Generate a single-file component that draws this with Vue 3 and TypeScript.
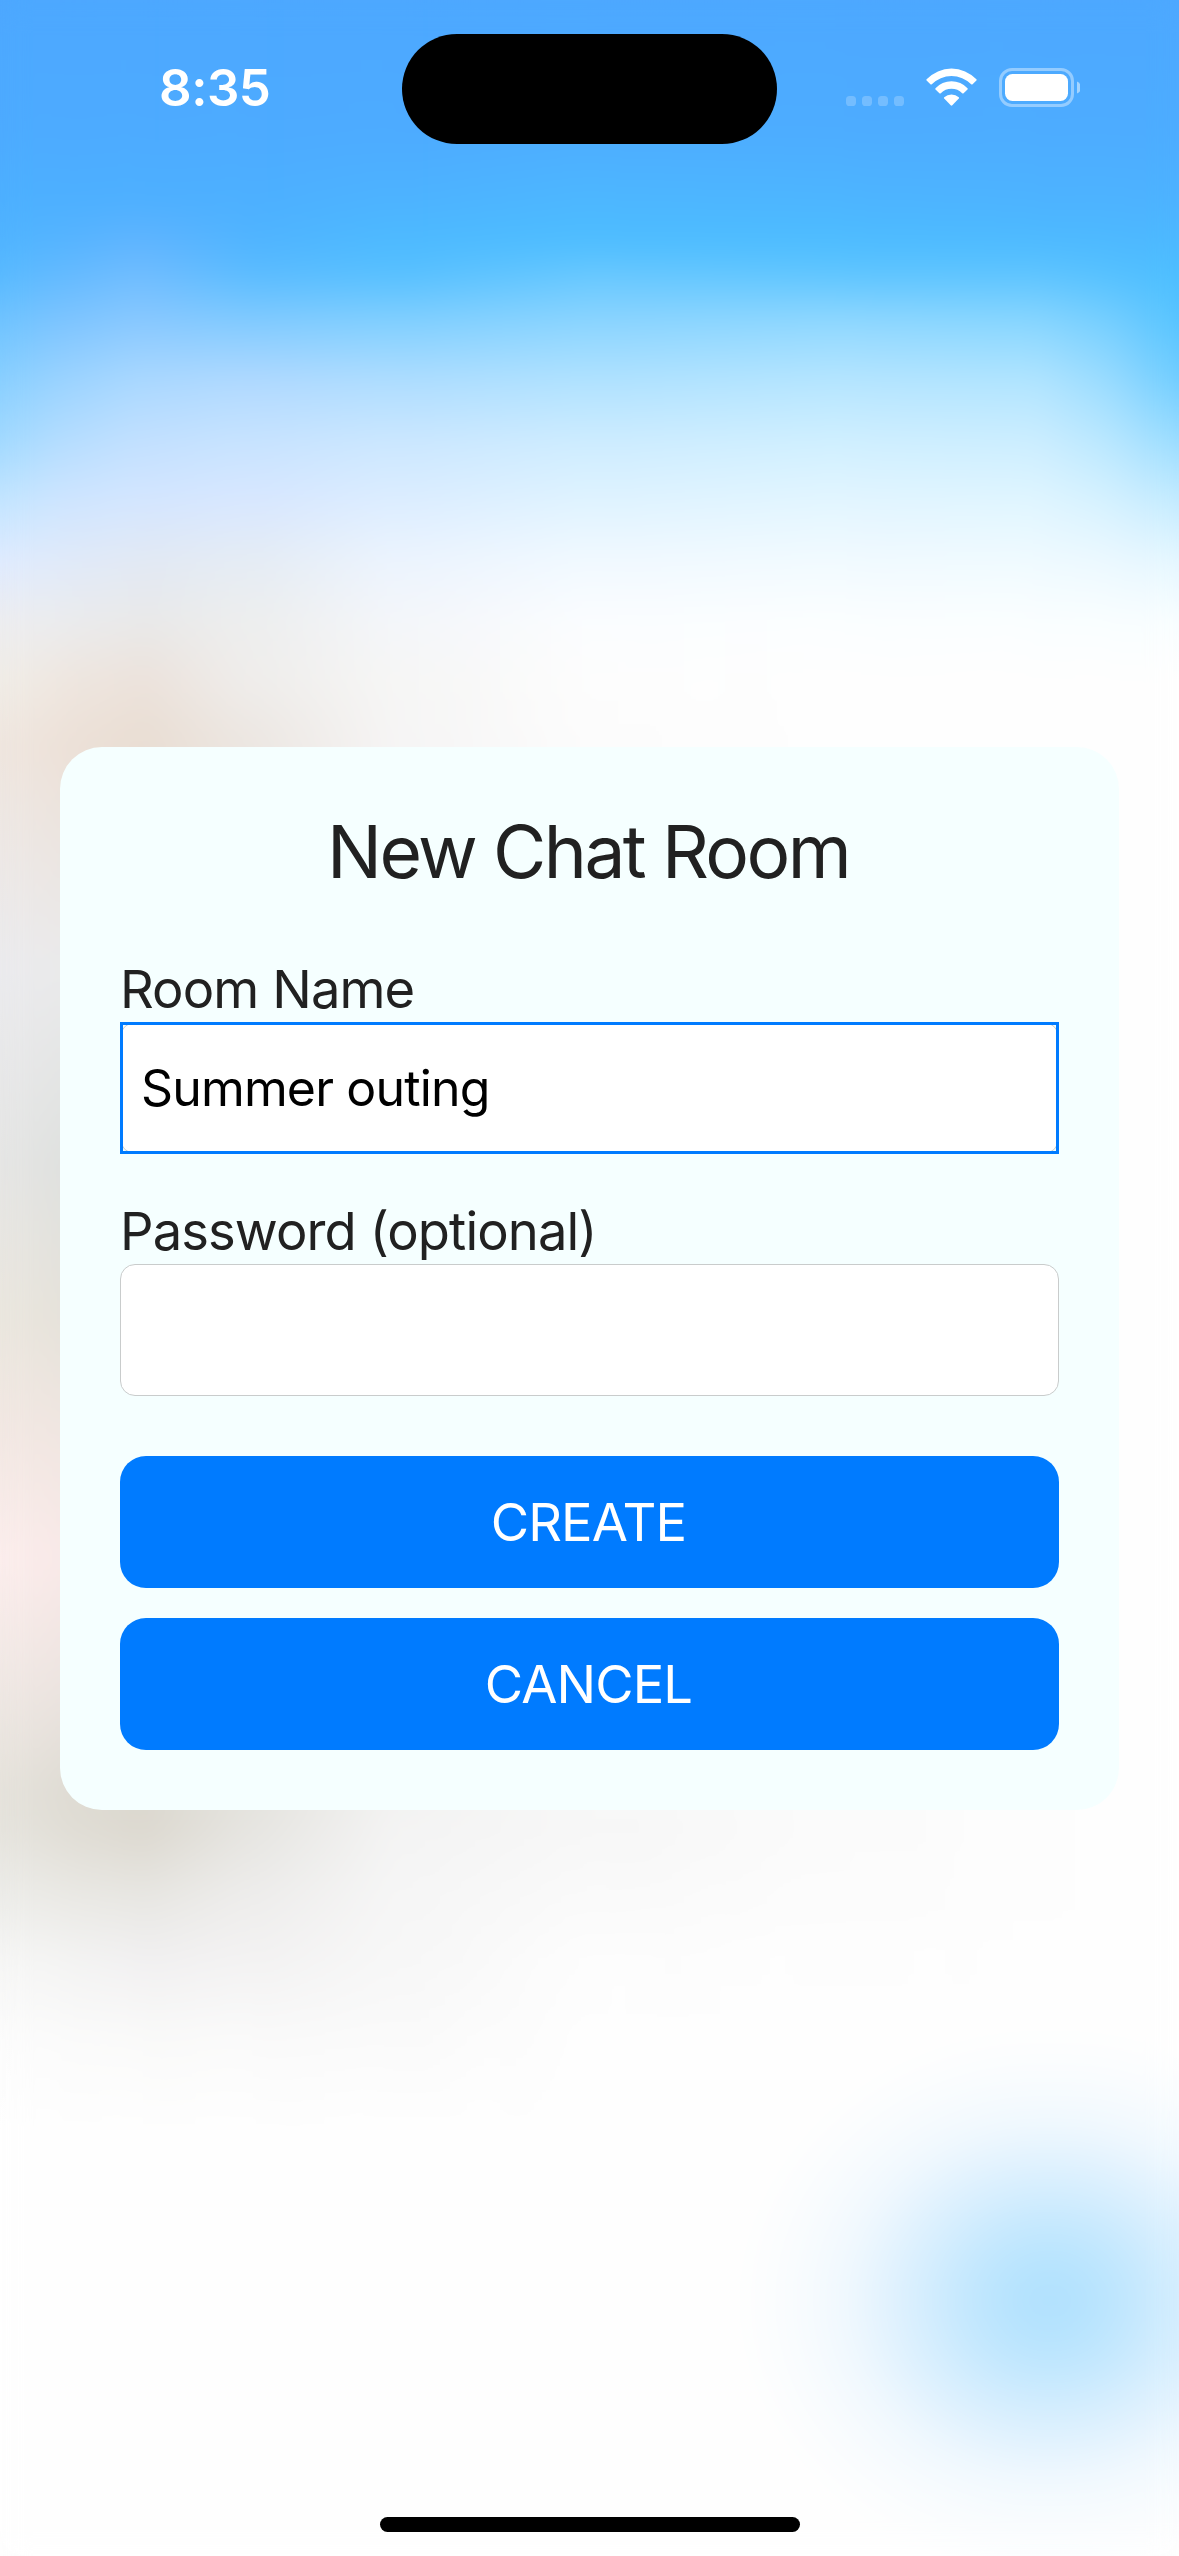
<script setup lang="ts">
import { ref } from 'vue'

const roomName = ref('Summer outing')
const password = ref('')

// Backdrop colour mesh: each column is a vertical gradient that fades
// horizontally into the next one.
const rows: number[] = [0, 130, 200, 240, 275, 320, 380, 440, 500, 560, 620, 680, 745, 970, 1160, 1320, 1430, 1560, 1690, 1790, 1830, 1900, 1960, 2040, 2130]
const mesh: { x: number; colors: string }[] = [
  { x: 0, colors: '4da8ff 4dabff 4db0ff 50b4ff 58baff 6ec3ff 88cfff a0d9ff c2e5ff dfebff ededf0 f0ede7 efe6df ebebee e6e6e5 ebe7df f2e8e3 fceeed efe8e4 e6e3dc e6e4de ededea f6f6f5 fcfcfc fefefe' },
  { x: 60, colors: '4da8ff 4dabff 4db0ff 55b4ff 63baff 7cc4ff 9ad3ff b4ddff cee5ff e0eafa ebecee efe7e0 ede1d8 eaeaeb dfe1df e6e2da f0e6e1 f9e9e8 ece4e0 dfdcd4 e1ded6 ebeae6 f4f4f3 fbfbfb fefefe' },
  { x: 140, colors: '4da8ff 4dabff 4eb0ff 5fb4ff 70bdff 88c8ff aad8ff c2e0ff d4e6ff e2e9f4 e9e9e9 ece2db e9ddd2 eaeaea dddfdd e4e0d8 eee4df f6e7e6 e8e1dc dbd8cf dcd8cf e8e7e3 f1f0f1 fafaf9 fefefe' },
  { x: 250, colors: '4da8ff 4dabff 4db0ff 50b4ff 5bbcff 80caff b0d9ff c7e3ff d8e7ff e5ecf4 edeeee efedeb ece6e1 eeeeee e4e4e4 e8e6e0 f0e8e4 f6eae9 ece7e4 e4e2dd e6e5e1 eeedec f3f2f2 fafafa fefefe' },
  { x: 400, colors: '4da8ff 4dabff 4db3ff 4dbaff 57c0ff 80cfff aeddff cbe7ff dcedff ecf4fe f4f6fa f6f6f5 f6f5f5 f8f8f8 f6f6f6 f6f6f5 f8f6f5 faf6f6 f6f4f3 f3f2f1 f4f4f4 f6f6f6 f7f7f7 fafafa fefefe' },
  { x: 600, colors: '4da8ff 4dadff 4db7ff 4dbdff 68c8ff 8ad4ff b0e2ff cdecff dff3ff f1f9ff fbfdff fdfdfd fcfcfc fdfdfd fdfdfd fdfdfd fdfdfd fcfcfc f9f9f9 f8f8f8 f7f7f7 fafafa fdfdfd fefefe fefefe' },
  { x: 850, colors: '4da8ff 4dacff 4db5ff 4dbcff 5fc5ff 8ed7ff b5e5ff cfefff e2f5ff f1faff fbfeff fefefe fefefe fefefe fefefe fefefe fefefe fefefe fcfcfc fbfbfb fbfbfb fcfcfc fdfdfd fefefe fefefe' },
  { x: 1040, colors: '4da8ff 4dacff 4db3ff 4dbaff 5ec4ff 86d5ff b0e4ff cbedff dff5ff effaff fafeff fefefe fefefe fefefe fefefe fefefe fefefe fefefe fdfdfd fdfdfd fdfdfd fdfdfd fefefe fefefe fefefe' },
  { x: 1110, colors: '4da8ff 4dacff 4db3ff 4db9ff 55c1ff 74ceff 98dbff b8e7ff d4f1ff ebf8ff f9feff fefefe fefefe fefefe fefefe fefefe fefefe fefefe fefefe fefefe fefefe fefefe fefefe fefefe fefefe' },
  { x: 1179, colors: '4da8ff 4dacff 4db2ff 4db8ff 4dbeff 56c3ff 6fccff 98dbff c2eaff e4f6ff f8fdff fefefe fefefe fefefe fefefe fefefe fefefe fefefe fefefe fefefe fefefe fefefe fefefe fefefe fefefe' },
]

const layers = mesh.map((column, i) => {
  const stops = column.colors.split(' ').map((c, r) => `#${c} ${rows[r]}px`).join(', ')
  const fade = i === 0 ? 'none' : `linear-gradient(to right, transparent ${mesh[i - 1].x}px, #000 ${column.x}px)`
  return { background: `linear-gradient(to bottom, ${stops})`, maskImage: fade }
})
</script>

<template>
  <div class="screen">
    <div class="backdrop" aria-hidden="true">
      <div v-for="(layer, i) in layers" :key="i" class="layer" :style="layer"></div>
      <div class="layer glow"></div>
      <div class="layer frost"></div>
    </div>

    <header class="status">
      <div class="side time">8:35</div>
      <div class="island"></div>
      <div class="side icons">
        <svg width="240" height="60" viewBox="840 60 240 60" fill="#fff">
          <g opacity="0.22">
            <rect x="846" y="96" width="10" height="10" rx="3.6" />
            <rect x="862" y="96" width="10" height="10" rx="3.6" />
            <rect x="878" y="96" width="10" height="10" rx="3.6" />
            <rect x="894" y="96" width="10" height="10" rx="3.6" />
          </g>
          <path d="M926.6 79.3A34.3 34.3 0 0 1 976.4 79.3Q976.9 80 976.4 80.6L972.6 84.3Q971.9 84.9 971.2 84.3A27.7 27.7 0 0 0 931.8 84.3Q931.1 84.9 930.4 84.3L926.6 80.6Q926.1 80 926.6 79.3Z" />
          <path d="M935.5 88.2A21.7 21.7 0 0 1 967.5 88.2Q968.1 88.9 967.5 89.5L963.6 93.2Q962.9 93.8 962.2 93.2A15.2 15.2 0 0 0 940.8 93.2Q940.1 93.8 939.4 93.2L935.5 89.5Q934.9 88.9 935.5 88.2Z" />
          <path d="M944.2 97.2A11 11 0 0 1 958.8 97.2Q959.4 97.9 958.8 98.6L952.3 105.3Q951.5 106.1 950.7 105.3L944.2 98.6Q943.6 97.9 944.2 97.2Z" />
          <rect x="1000.5" y="69.5" width="72" height="36" rx="11.5" fill="none" stroke="#fff" stroke-opacity="0.4" stroke-width="3" />
          <rect x="1005" y="74" width="63" height="27" rx="7.5" />
          <path d="M1077 81.6Q1081.2 83.6 1081.2 87.6T1077 93.6Z" opacity="0.5" />
        </svg>
      </div>
    </header>

    <main class="stage">
      <form class="card" @submit.prevent>
        <h1 class="title">New Chat Room</h1>
        <label class="field">
          <span class="label">Room Name</span>
          <span class="control focused"><input v-model="roomName" type="text" /></span>
        </label>
        <label class="field">
          <span class="label">Password (optional)</span>
          <span class="control"><input v-model="password" type="password" /></span>
        </label>
        <div class="actions">
          <button type="button">CREATE</button>
          <button type="button">CANCEL</button>
        </div>
      </form>
    </main>

    <footer class="home"><div class="indicator"></div></footer>
  </div>
</template>

<style>
body {
  margin: 0;
}
</style>

<style scoped>
.screen {
  position: relative;
  width: 1179px;
  height: 2556px;
  overflow: hidden;
  display: flex;
  flex-direction: column;
  font-family: Inter, "Liberation Sans", sans-serif;
  color: #212121;
}
.backdrop,
.layer {
  position: absolute;
  inset: 0;
}
.glow {
  background: radial-gradient(ellipse 310px 270px at 1050px 2301px,
    rgba(77, 188, 255, 0.43) 0%, rgba(77, 188, 255, 0.415) 10%, rgba(77, 188, 255, 0.37) 20%,
    rgba(77, 186, 255, 0.31) 30%, rgba(77, 184, 255, 0.24) 40%, rgba(77, 180, 255, 0.155) 53%,
    rgba(77, 180, 255, 0.08) 66%, rgba(77, 180, 255, 0.03) 82%, rgba(77, 180, 255, 0) 100%);
}
.frost {
  backdrop-filter: blur(14px);
}
.status {
  position: relative;
  display: flex;
  justify-content: space-between;
  height: 177px;
  padding-top: 34px;
  box-sizing: border-box;
}
.side {
  width: 402px;
  box-sizing: border-box;
}
.island {
  width: 375px;
  height: 110px;
  border-radius: 55px;
  background: #000;
}
.time {
  padding: 24px 0 0 159px;
  font-size: 51px;
  line-height: 60px;
  font-weight: 560;
  color: #fff;
  letter-spacing: -0.5px;
}
.icons {
  padding: 26px 0 0 63px;
}
.icons svg {
  display: block;
}
.stage {
  position: relative;
  flex: 1;
  padding: 570px 60px 0;
}
.card {
  height: 1063px;
  box-sizing: border-box;
  padding: 60px;
  border-radius: 42px;
  background: #f5ffff;
  display: flex;
  flex-direction: column;
}
.title {
  margin: 0 0 60px;
  height: 90px;
  line-height: 90px;
  font-size: 73px;
  font-weight: 400;
  text-align: center;
  letter-spacing: -2.6px;
  text-indent: -3px;
  white-space: nowrap;
}
.field {
  display: block;
  margin-bottom: 45px;
}
.label {
  display: block;
  height: 65px;
  line-height: 65px;
  font-size: 52.5px;
  letter-spacing: -0.9px;
  white-space: nowrap;
}
.control {
  position: relative;
  display: block;
}
.control input {
  display: block;
  width: 100%;
  height: 132px;
  box-sizing: border-box;
  margin: 0;
  padding: 0 20px;
  border: 1px solid #c9cccc;
  border-radius: 15px;
  outline: none;
  background: #fff;
  font: 400 50px Inter, "Liberation Sans", sans-serif;
  letter-spacing: -0.85px;
  color: #000;
}
.control.focused::after {
  content: "";
  position: absolute;
  inset: 0;
  border: 3px solid #007bff;
  pointer-events: none;
}
.actions {
  display: flex;
  flex-direction: column;
  gap: 30px;
  margin-top: 15px;
}
.actions button {
  height: 132px;
  border: 0;
  padding: 0 2px 0 0;
  border-radius: 26px;
  background: #007bff;
  color: #fff;
  font: 400 52.5px/132px Inter, "Liberation Sans", sans-serif;
  letter-spacing: -0.9px;
}
.home {
  position: relative;
  display: flex;
  justify-content: center;
  padding-bottom: 24px;
}
.indicator {
  width: 420px;
  height: 15px;
  border-radius: 8px;
  background: #000;
}
</style>
